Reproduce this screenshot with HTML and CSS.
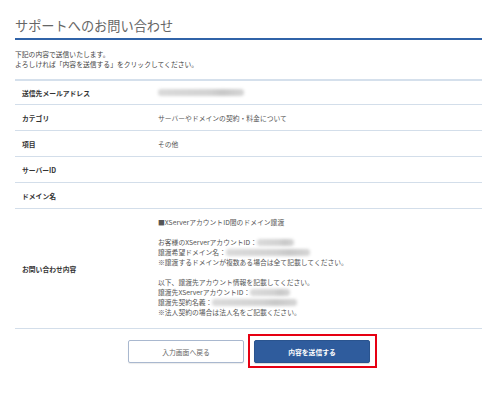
FILE: index.html
```html
<!DOCTYPE html>
<html lang="ja">
<head>
<meta charset="utf-8">
<link rel="stylesheet" href="styles.css">
</head>
<body>
<div class="page">
  <h1 class="title">サポートへのお問い合わせ</h1>
  <p class="intro">下記の内容で送信いたします。<br>よろしければ「内容を送信する」をクリックしてください。</p>
  <div class="table">
    <div class="row first">
      <div class="label">送信先メールアドレス</div>
      <div class="value"><span class="blur" style="width:86px"></span></div>
    </div>
    <div class="row">
      <div class="label">カテゴリ</div>
      <div class="value">サーバーやドメインの契約・料金について</div>
    </div>
    <div class="row">
      <div class="label">項目</div>
      <div class="value">その他</div>
    </div>
    <div class="row">
      <div class="label">サーバーID</div>
      <div class="value"></div>
    </div>
    <div class="row">
      <div class="label">ドメイン名</div>
      <div class="value"></div>
    </div>
    <div class="row big">
      <div class="label">お問い合わせ内容</div>
      <div class="value multi">
        <div class="line">■XServerアカウントID間のドメイン譲渡</div>
        <div class="line"></div>
        <div class="line">お客様のXServerアカウントID：<span class="blur" style="width:37px"></span></div>
        <div class="line">譲渡希望ドメイン名：<span class="blur" style="width:84px"></span></div>
        <div class="line">※譲渡するドメインが複数ある場合は全て記載してください。</div>
        <div class="line"></div>
        <div class="line">以下、譲渡先アカウント情報を記載してください。</div>
        <div class="line">譲渡先XServerアカウントID：<span class="blur" style="width:40px"></span></div>
        <div class="line">譲渡先契約名義：<span class="blur" style="width:85px"></span></div>
        <div class="line">※法人契約の場合は法人名をご記載ください。</div>
      </div>
    </div>
  </div>
  <div class="actions">
    <button class="btn back">入力画面へ戻る</button>
    <div class="highlight">
      <button class="btn send">内容を送信する</button>
    </div>
  </div>
</div>
</body>
</html>
```

FILE: styles.css
```css
html, body {
  margin: 0;
  padding: 0;
  background: #ffffff;
}
body {
  font-family: "Noto Sans CJK JP", "Noto Sans", sans-serif;
  color: #444;
}
.page {
  width: 467px;
  padding: 0 18px 24px 15px;
}
.title {
  margin: 0;
  padding-top: 16px;
  padding-bottom: 2px;
  font-size: 13.2px;
  line-height: 20px;
  font-weight: 400;
  color: #666;
  border-bottom: 2px solid #3063a8;
}
.intro {
  margin: 9px 0 0;
  font-size: 6.8px;
  line-height: 10px;
  color: #444;
}
.table {
  margin-top: 10px;
  border-top: 2px solid #d5e0ec;
}
.row {
  display: flex;
  align-items: center;
  height: 25px;
  border-bottom: 1px solid #d3deea;
}
.row.first {
  height: 23px;
}
.row.big {
  height: auto;
}
.label {
  width: 136px;
  padding-left: 7px;
  font-size: 6.8px;
  font-weight: 700;
  color: #333;
}
.value {
  flex: 1;
  font-size: 6.8px;
  color: #555;
  display: flex;
  align-items: center;
}
.value.multi {
  display: block;
  padding: 8px 0 11px;
}
.line {
  height: 10px;
  line-height: 10px;
  display: flex;
  align-items: center;
}
.blur {
  display: inline-block;
  height: 7px;
  background: linear-gradient(90deg, #dadada, #d2d2d2 60%, #c8c8c8 75%, #d6d6d6);
  filter: blur(1.6px);
  border-radius: 3px;
}
.actions {
  display: flex;
  justify-content: center;
  gap: 10px;
  margin-top: 11px;
  padding-left: 1px;
}
.btn {
  width: 116px;
  height: 23px;
  margin: 0;
  padding: 0;
  font-family: "Noto Sans CJK JP", "Noto Sans", sans-serif;
  font-size: 6.8px;
  border-radius: 2px;
  cursor: pointer;
}
.back {
  background: #ffffff;
  border: 1px solid #a9b8cf;
  color: #666;
  box-shadow: 0 1px 1px rgba(0, 0, 0, 0.08);
}
.send {
  background: #2f5c9d;
  border: 1px solid #2a548f;
  color: #ffffff;
  font-weight: 700;
  box-shadow: 0 1px 1px rgba(0, 0, 0, 0.15);
  display: block;
}
.highlight {
  position: relative;
}
.highlight::after {
  content: "";
  position: absolute;
  top: -6px;
  left: -6px;
  right: -7px;
  bottom: -5px;
  border: 2px solid #e60012;
  pointer-events: none;
}
```
